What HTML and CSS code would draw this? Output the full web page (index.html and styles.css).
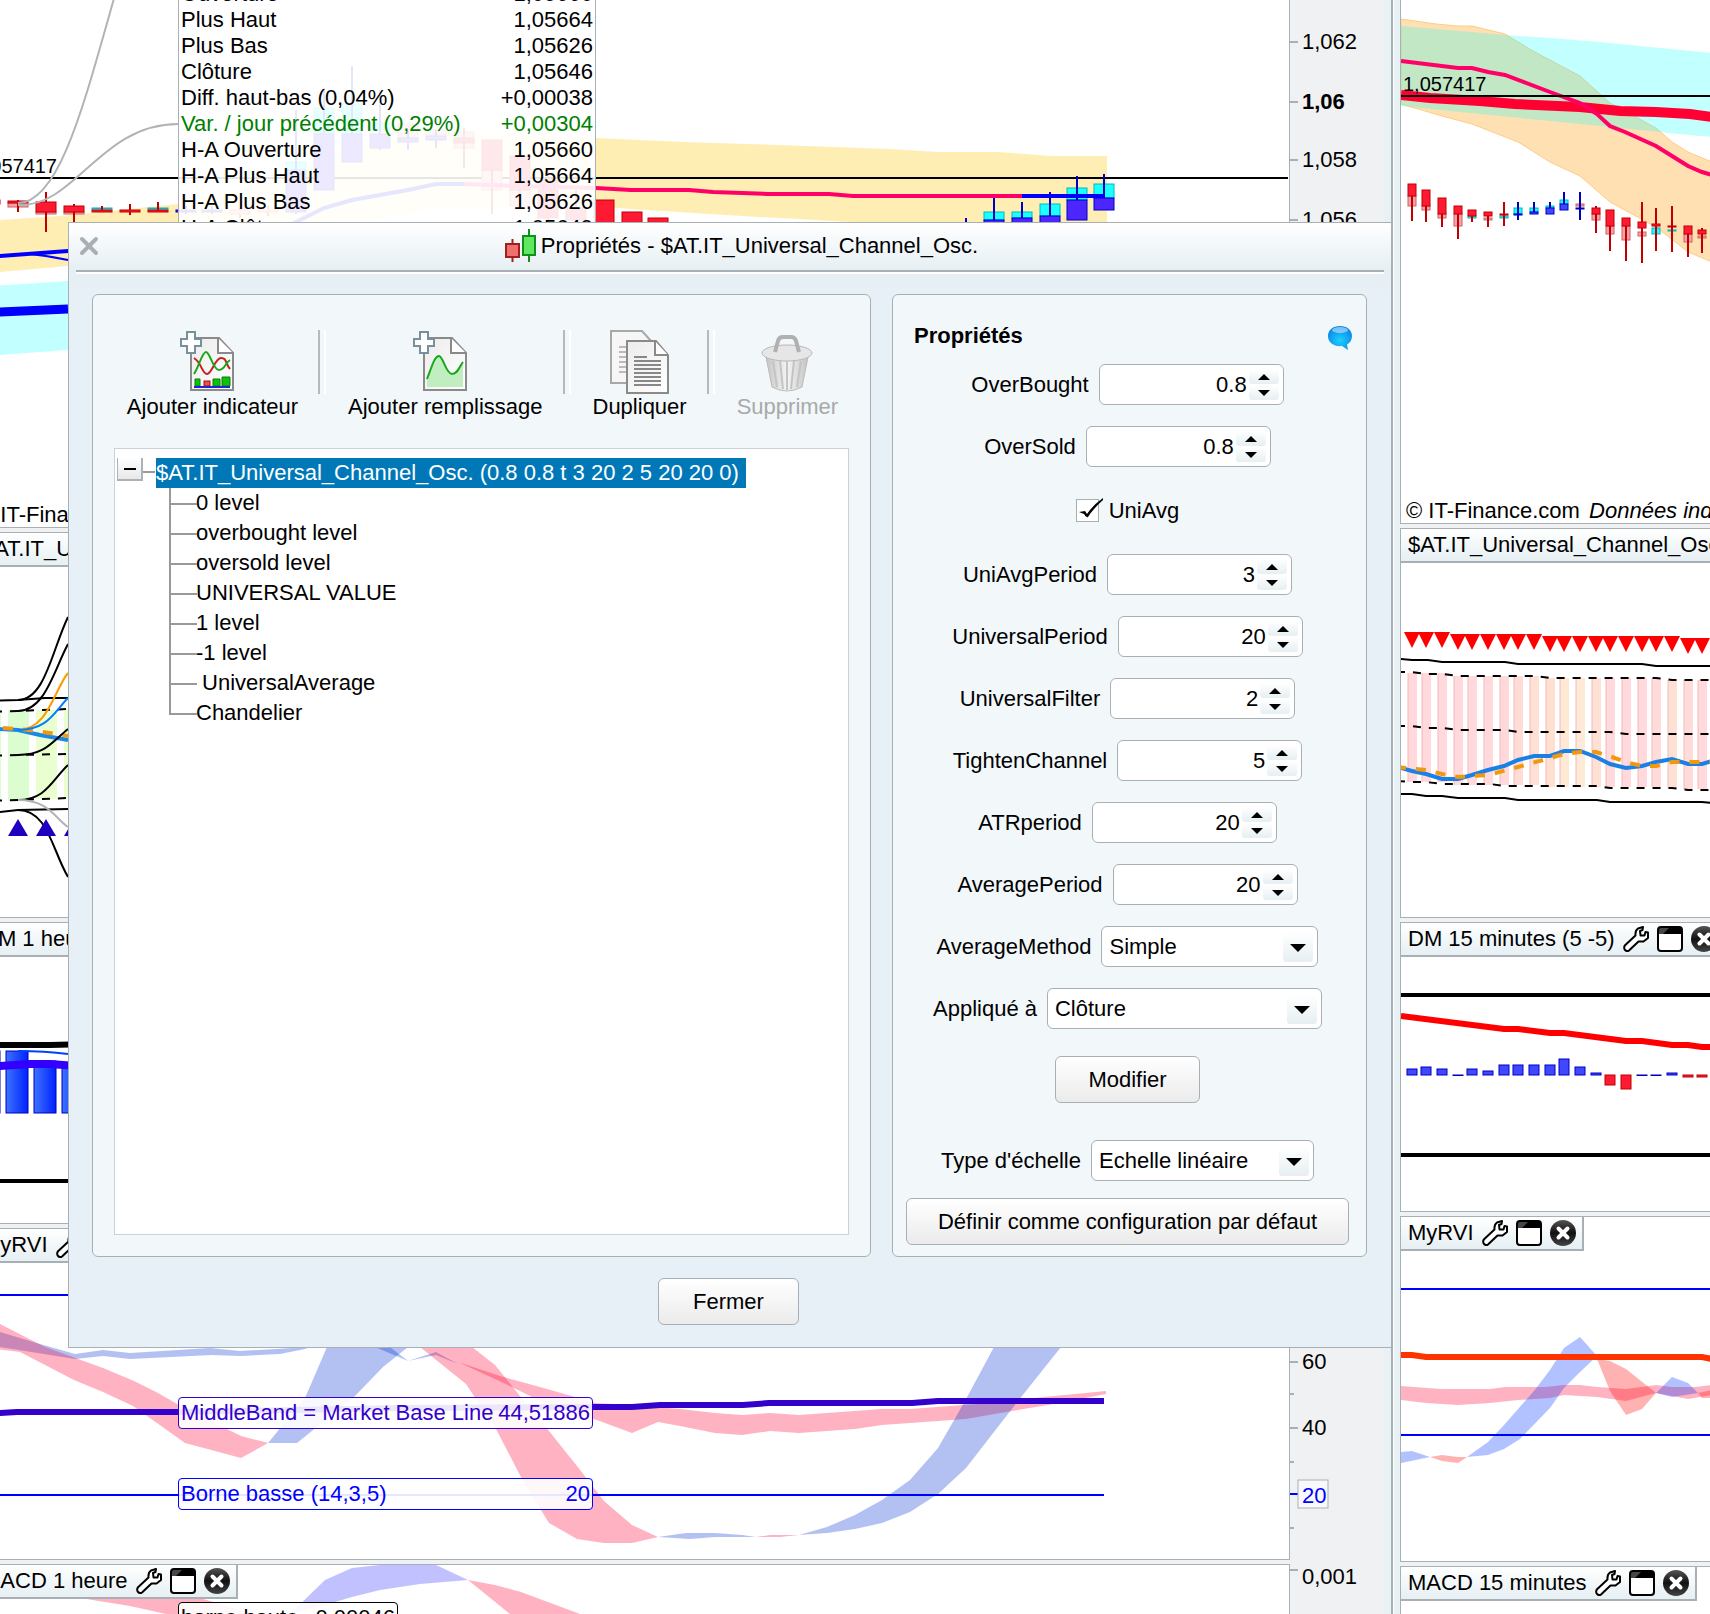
FILE: index.html
```html
<!DOCTYPE html>
<html lang="fr">
<head>
<meta charset="UTF-8">
<meta name="viewport" content="width=device-width, initial-scale=1.0">
<title>Propriétés - $AT.IT_Universal_Channel_Osc.</title>
<link rel="stylesheet" href="styles.css">
</head>
<body>

<!-- Shared icons -->
<svg class="defs" aria-hidden="true">
    <defs>
        <linearGradient id="blackShine" x1="0" y1="0" x2="0" y2="1">
            <stop offset="0" stop-color="#555"/>
            <stop offset="0.5" stop-color="#111"/>
            <stop offset="1" stop-color="#444"/>
        </linearGradient>
        <linearGradient id="barBlue">
            <stop offset="0" stop-color="#3d73ff"/>
            <stop offset="1" stop-color="#0022ff"/>
        </linearGradient>
        <linearGradient id="paper" x1="0" y1="0" x2="1" y2="1">
            <stop offset="0" stop-color="#ececec"/>
            <stop offset="1" stop-color="#ffffff"/>
        </linearGradient>
        <radialGradient id="bubble" cx="0.5" cy="0.6" r="0.6">
            <stop offset="0" stop-color="#1fd0ff"/>
            <stop offset="1" stop-color="#0a86e8"/>
        </radialGradient>
        <linearGradient id="can">
            <stop offset="0" stop-color="#c4c4c4"/>
            <stop offset="0.5" stop-color="#f4f4f4"/>
            <stop offset="1" stop-color="#c4c4c4"/>
        </linearGradient>
    </defs>
    <symbol id="wrench" viewBox="0 0 26 26">
        <path d="M20 1 15 2.500Q12 4.500 12.500 9.500L1.800 19.500Q0.500 22 2 24Q4 26 6 24.500L15.500 15.500H20.500L25 12V6.500L22.500 6L21.500 9.500L17.500 9.500L17 5L19.500 4Z" fill="#fff" stroke="#000" stroke-width="2" stroke-linejoin="round"/>
    </symbol>
    <symbol id="restore" viewBox="0 0 26 26">
        <rect x="1" y="1" width="24" height="24" rx="3" fill="#fff" stroke="#000" stroke-width="2"/>
        <path d="M1 8V4Q1 1 4 1H22Q25 1 25 4V8Z" fill="#000"/>
        <path d="M2 8V4Q2 2 4 2H12L6 8Z" fill="#777" opacity="0.6"/>
    </symbol>
    <symbol id="close" viewBox="0 0 26 26">
        <circle cx="13" cy="13" r="13" fill="url(#blackShine)"/>
        <path d="M8.500 8.500 17.500 17.500M17.500 8.500 8.500 17.500" stroke="#fff" stroke-width="4" stroke-linecap="round"/>
    </symbol>
</svg>

<main class="workspace">

    <section class="window window-hour">
        <div class="panels">
            <div class="panel">
                <svg class="chart">
                    <g transform="translate(24 0)">
                        <path class="band-yellow" d="M-24 222 0 220 60 216 178 204 240 190 300 165 360 145 420 135 500 134 596 138 683 142 779 145 889 149 938 152 999 152 1051 156 1107 156V240L851 222 725 215 631 209 560 204 440 208 340 225 240 250 178 258 68 266 0 272-24 274Z"/>
                        <path class="band-cyan" d="M-24 287 68 281 300 260V340L68 350 0 355H-24Z"/>
                        <path d="M-24 258 0 256 68 251 178 247" stroke="#00f" stroke-width="4"/>
                        <path d="M30 254Q50 256 68 260" stroke="#00f" stroke-width="2"/>
                        <path d="M-24 314 0 312 68 309" stroke="#00f" stroke-width="9"/>
                        <path d="M-24 178H1288" stroke="#000" stroke-width="2"/>
                        <g id="hourCandles"></g>
                        <path d="M260 240 296 222 324 208 352 200 408 190 436 184H464" stroke="#00f" stroke-width="4"/>
                        <path d="M464 184 520 186 596 188 631 190H689L713 192 768 194H829L853 196H1022" stroke="#ff0066" stroke-width="4"/>
                        <path d="M1022 196H1104" stroke="#00f" stroke-width="4"/>
                        <text class="level" x="57" y="173" text-anchor="end">1,057417</text>
                        <path class="link" d="M18 203C60 203 85 100 115-5"/>
                        <path class="link" d="M18 205C75 208 100 124 178 124"/>
                    </g>
                </svg>
                <dl class="quote">
                    <div><dt>Ouverture</dt><dd>1,05660</dd></div>
                    <div><dt>Plus Haut</dt><dd>1,05664</dd></div>
                    <div><dt>Plus Bas</dt><dd>1,05626</dd></div>
                    <div><dt>Clôture</dt><dd>1,05646</dd></div>
                    <div><dt>Diff. haut-bas (0,04%)</dt><dd>+0,00038</dd></div>
                    <div class="up"><dt>Var. / jour précédent (0,29%)</dt><dd>+0,00304</dd></div>
                    <div><dt>H-A Ouverture</dt><dd>1,05660</dd></div>
                    <div><dt>H-A Plus Haut</dt><dd>1,05664</dd></div>
                    <div><dt>H-A Plus Bas</dt><dd>1,05626</dd></div>
                    <div><dt>H-A Clôture</dt><dd>1,05649</dd></div>
                </dl>
                <p class="copyright">© IT-Finance.com</p>
            </div>

            <div class="panel">
                <svg class="chart">
                    <g transform="translate(24 -533)">
                        <path d="M-20 710H1V801H-20Z" fill="#d9ffcc"/>
                        <path d="M8 710H29V801H8Z" fill="#dcfdd0"/>
                        <path d="M36 710H57V799H36Z" fill="#eaffd0"/>
                        <path d="M64 709H85V798H64Z" fill="#eaffd0"/>
                        <path d="M-24 701 18 700 45 698H90" stroke="#000" stroke-width="2"/>
                        <path d="M-24 813 0 812 18 810 68 809H90" stroke="#000" stroke-width="2"/>
                        <path class="dash" d="M-22 712 18 711 68 709"/>
                        <path class="dash" d="M-22 756 18 755 68 754"/>
                        <path class="dash" d="M-22 801 18 800 68 798"/>
                        <path d="M-24 727 0 729 18 730 40 735 68 740" stroke="#1a88e6" stroke-width="4"/>
                        <path class="dash-orange" d="M3 728 30 730 68 736"/>
                        <path d="M18 700C45 700 52 650 68 617M18 711C45 711 54 670 68 644M18 755C45 755 52 742 68 729M18 800C46 800 52 780 68 765M18 810C48 810 52 850 68 877" stroke="#000" stroke-width="2"/>
                        <path d="M18 730C48 730 54 690 68 673" stroke="#ff9900" stroke-width="2"/>
                        <path d="M18 730C48 730 54 712 68 698" stroke="#0080ff" stroke-width="2"/>
                        <path class="link" d="M18 800C48 800 54 817 68 827"/>
                        <path d="M18 819 28 836H8ZM46 819 56 836H36ZM74 819 84 836H64Z" fill="#2000c0"/>
                    </g>
                </svg>
                <header class="title-bar wide">
                    <span>$AT.IT_Universal_Channel_Osc.</span>
                </header>
            </div>

            <div class="panel">
                <svg class="chart">
                    <g transform="translate(24 -922)">
                        <g fill="url(#barBlue)" stroke="#0000c0">
                            <rect x="-22" y="1050" width="22" height="62"/>
                            <rect x="6" y="1050" width="22" height="62"/>
                            <rect x="34" y="1060" width="22" height="52"/>
                            <rect x="62" y="1062" width="22" height="50"/>
                        </g>
                        <path d="M-24 1044H50L90 1043" stroke="#000" stroke-width="6"/>
                        <path d="M-24 1067 0 1065 30 1063H50L90 1066" stroke="#3300ff" stroke-width="8"/>
                        <path d="M18 1050Q45 1050 68 1053" stroke="#0040ff" stroke-width="2"/>
                        <path d="M-24 1180H90" stroke="#000" stroke-width="4"/>
                    </g>
                </svg>
                <header class="title-bar wide">
                    <span>DM 1 heure (5 -5)</span>
                </header>
            </div>

            <div class="panel">
                <svg class="chart">
                    <g transform="translate(24 -1228)">
                        <path class="fill-blue" d="M0 1331 40 1343 75 1353 103 1349 130 1352 210 1347 240 1350 310 1346 305 1348 280 1353 240 1355 212 1354 130 1358 103 1355 75 1358 0 1346Z"/>
                        <path class="fill-pink" d="M-20 1314 0 1323 45 1346 103 1367 134 1380 158 1392 179 1404 241 1435 268 1442 241 1457 215 1450 185 1442 133 1405 103 1391 74 1379 20 1351-20 1346Z"/>
                        <path class="fill-blue" d="M268 1442 305 1397 327 1346H408L383 1366 355 1395 297 1442Z"/>
                        <path class="fill-blue" d="M375 1346 408 1360 436 1351 458 1363 436 1354 408 1360 390 1346Z"/>
                        <path class="fill-pink" d="M458 1361 500 1375 540 1386 596 1402 632 1404 680 1408 715 1412 742 1414 770 1412 799 1414 882 1408 910 1408 990 1402 1044 1396 1106 1390V1393L1060 1402 1012 1410 966 1418 910 1422 882 1424 855 1428 799 1432 770 1430 742 1434 715 1432 680 1425 658 1421 632 1432 594 1418 540 1400 512 1386Z"/>
                        <path class="fill-pink" d="M420 1346 466 1383 496 1428 523 1480 549 1522 577 1538 604 1542H632L658 1536 632 1524 604 1500 577 1465 549 1430 520 1395 495 1364 472 1346Z"/>
                        <path class="fill-blue" d="M658 1536 686 1532H715L742 1534 756 1536 715 1536 690 1538Z"/>
                        <path class="fill-pink" d="M756 1536 770 1534H799L780 1536Z"/>
                        <path class="fill-blue" d="M799 1534 827 1526 855 1514 882 1499 910 1479 938 1447 965 1400 994 1346H1061L1018 1400 966 1467 938 1493 910 1511 882 1522 855 1528 827 1532Z"/>
                        <path d="M-24 1294H90" stroke="#00f" stroke-width="2"/>
                        <path d="M-24 1413 0 1412 17 1411H178L400 1407 596 1406 632 1406 660 1404H743L769 1402H912L938 1400H1104" stroke="#3300cc" stroke-width="6"/>
                        <path d="M-24 1494H1104" stroke="#00f" stroke-width="2"/>
                    </g>
                </svg>
                <header class="title-bar">
                    <span>MyRVI</span>
                    <button aria-label="Réglages"><svg><use href="#wrench"/></svg></button>
                    <button aria-label="Restaurer"><svg><use href="#restore"/></svg></button>
                    <button aria-label="Fermer"><svg><use href="#close"/></svg></button>
                </header>
                <div class="tag tag-middle"><span>MiddleBand = Market Base Line</span><span>44,51886</span></div>
                <div class="tag tag-low"><span>Borne basse (14,3,5)</span><span>20</span></div>
            </div>

            <div class="panel">
                <svg class="chart">
                    <g transform="translate(24 -1565)">
                        <path class="fill-violet" d="M290 1614 325 1580 352 1568 380 1565H436L468 1580 420 1584 380 1590 352 1597 325 1605Z"/>
                        <path class="fill-pink" d="M468 1580 495 1585 521 1592 580 1614H510Z"/>
                        <path class="fill-pink" d="M80 1598 130 1606 175 1616H260L200 1598Z"/>
                    </g>
                </svg>
                <header class="title-bar">
                    <span>MACD 1 heure</span>
                    <button aria-label="Réglages"><svg><use href="#wrench"/></svg></button>
                    <button aria-label="Restaurer"><svg><use href="#restore"/></svg></button>
                    <button aria-label="Fermer"><svg><use href="#close"/></svg></button>
                </header>
                <div class="tag tag-high"><span>borne haute</span><span>0,00046</span></div>
            </div>
        </div>

        <svg class="axis">
            <path d="M0 42H8M0 102H8M0 160H8M0 220H8M0 1362H8M0 1394H4M0 1428H8M0 1462H4M0 1528H4M0 1570H8" stroke="#a9b0b5" stroke-width="2"/>
            <path d="M0 1494H8" stroke="#00f" stroke-width="2"/>
            <rect x="8" y="1480" width="30" height="28" fill="#f8f9fa" stroke="#a9b0b5"/>
            <text x="12" y="49">1,062</text>
            <text x="12" y="109" font-weight="bold">1,06</text>
            <text x="12" y="167">1,058</text>
            <text x="12" y="227">1,056</text>
            <text x="12" y="1369">60</text>
            <text x="12" y="1435">40</text>
            <text x="12" y="1503" class="axis-current">20</text>
            <text x="12" y="1584">0,001</text>
        </svg>
    </section>

    <section class="window window-quarter">
        <div class="panels">
            <div class="panel">
                <svg class="chart">
                    <g transform="translate(-1401 0)">
                        <path class="band-orange" d="M1401 19 1436 24 1458 26H1472L1505 34 1533 51 1580 76 1610 103 1656 128 1672 142 1688 152 1712 162V262L1688 252 1656 227 1610 202 1580 176 1550 162 1518 142 1472 124 1442 116 1401 104Z"/>
                        <path class="band-cyan" d="M1401 26 1460 31 1505 35 1550 38 1600 42 1640 46 1712 53V137L1688 135 1640 130 1580 124 1550 121 1460 112 1401 106Z"/>
                        <path d="M1401 95 1430 98 1480 101 1515 104 1580 107 1620 111 1656 112 1690 114 1712 117" stroke="#ff0033" stroke-width="10"/>
                        <path d="M1401 61 1458 68H1472L1488 72 1505 75 1550 92 1580 103 1597 114 1610 126 1625 132 1656 146 1672 156 1688 166 1702 172 1712 175" stroke="#ff0066" stroke-width="4"/>
                        <path d="M1401 96H1712" stroke="#000" stroke-width="2"/>
                        <text class="level" x="1403" y="91">1,057417</text>
                        <g id="quarterCandles"></g>
                    </g>
                </svg>
                <p class="copyright">© IT-Finance.com <em>Données indicatives</em></p>
            </div>

            <div class="panel">
                <svg class="chart">
                    <g transform="translate(-1401 -529)">
                        <g id="channelBars"></g>
                        <g id="sellMarks"></g>
                        <path d="M1401 659 1412 660H1428L1442 662H1505L1518 664H1642L1656 666H1712" stroke="#000" stroke-width="2"/>
                        <path d="M1401 794H1412L1426 796H1442L1458 798H1505L1518 800H1597L1610 802H1702L1712 803" stroke="#000" stroke-width="2"/>
                        <path class="dash" d="M1397 672H1412L1426 674H1442L1458 676H1534L1550 678H1656L1672 680H1712"/>
                        <path class="dash" d="M1397 726H1412L1426 728H1442L1458 730H1505L1518 732H1610L1626 734H1712"/>
                        <path class="dash" d="M1397 781 1412 782H1426L1442 784H1490L1505 786H1597L1610 788H1672L1688 790H1712"/>
                        <path d="M1401 768 1412 771 1426 774 1442 779H1458L1472 775 1488 770 1504 766 1518 760 1534 756H1550L1564 751H1580L1596 757 1610 764 1626 768 1642 766 1656 762 1672 759 1688 764H1702L1712 761" stroke="#1a80e6" stroke-width="4"/>
                        <path class="dash-orange" d="M1396 767 1426 770 1442 774 1458 777 1488 775 1518 767 1550 758 1564 754 1580 752H1596L1612 757 1626 762 1642 766H1656L1672 762H1712"/>
                    </g>
                </svg>
                <header class="title-bar wide">
                    <span>$AT.IT_Universal_Channel_Osc.</span>
                </header>
            </div>

            <div class="panel">
                <svg class="chart">
                    <g transform="translate(-1401 -922)">
                        <path d="M1401 994H1712M1401 1154H1712" stroke="#000" stroke-width="4"/>
                        <path d="M1401 1015 1504 1028H1518L1550 1032H1564L1626 1040H1642L1672 1044H1688L1702 1046H1712" stroke="#f00" stroke-width="6"/>
                        <g id="dmBars"></g>
                    </g>
                </svg>
                <header class="title-bar wide">
                    <span>DM 15 minutes (5 -5)</span>
                    <button aria-label="Réglages"><svg><use href="#wrench"/></svg></button>
                    <button aria-label="Restaurer"><svg><use href="#restore"/></svg></button>
                    <button aria-label="Fermer"><svg><use href="#close"/></svg></button>
                </header>
            </div>

            <div class="panel">
                <svg class="chart">
                    <g transform="translate(-1401 -1216)">
                        <path class="fill-pink" d="M1401 1385 1427 1387 1442 1388H1490L1505 1386H1545L1564 1384H1580L1597 1386 1626 1388 1656 1384 1672 1386H1695L1712 1384V1394L1688 1398 1672 1395 1656 1392 1626 1400 1597 1396 1564 1394 1550 1397 1518 1399 1490 1402 1458 1404 1426 1402 1401 1399Z"/>
                        <path class="fill-sky" d="M1401 1451 1412 1450 1430 1456 1401 1462Z"/>
                        <path class="fill-red" d="M1430 1456 1442 1454 1458 1456H1467L1458 1462 1442 1460Z"/>
                        <path class="fill-sky" d="M1467 1456 1488 1441 1504 1424 1534 1390 1550 1369 1564 1347 1580 1336 1597 1355 1580 1371 1564 1387 1550 1407 1520 1438 1504 1448 1488 1454Z"/>
                        <path class="fill-red" d="M1597 1358 1610 1360 1626 1368 1656 1392 1642 1408 1626 1414 1610 1390Z"/>
                        <path class="fill-sky" d="M1656 1392 1672 1376 1688 1382 1698 1392 1672 1396Z"/>
                        <path class="fill-red" d="M1698 1392 1712 1389V1397H1702Z"/>
                        <path d="M1401 1288H1712M1401 1434H1712" stroke="#00f" stroke-width="2"/>
                        <path d="M1401 1354H1412L1426 1356H1702L1712 1358" stroke="#ff3300" stroke-width="6"/>
                    </g>
                </svg>
                <header class="title-bar">
                    <span>MyRVI</span>
                    <button aria-label="Réglages"><svg><use href="#wrench"/></svg></button>
                    <button aria-label="Restaurer"><svg><use href="#restore"/></svg></button>
                    <button aria-label="Fermer"><svg><use href="#close"/></svg></button>
                </header>
            </div>

            <div class="panel">
                <header class="title-bar">
                    <span>MACD 15 minutes</span>
                    <button aria-label="Réglages"><svg><use href="#wrench"/></svg></button>
                    <button aria-label="Restaurer"><svg><use href="#restore"/></svg></button>
                    <button aria-label="Fermer"><svg><use href="#close"/></svg></button>
                </header>
            </div>
        </div>
    </section>

    <div class="dialog" role="dialog" aria-labelledby="dialogTitle">
        <header class="dialog-header">
            <button class="dialog-close" aria-label="Fermer la fenêtre">
                <svg width="20" height="20" viewBox="0 0 20 20"><path d="M3 3 17 17M17 3 3 17" stroke="#a9b0b5" stroke-width="4" stroke-linecap="round"/></svg>
            </button>
            <h1 id="dialogTitle">
                <svg width="32" height="34" viewBox="0 0 32 34">
                    <path d="M7.500 10V33" stroke="#a02020" stroke-width="2"/>
                    <rect x="1" y="15" width="13" height="13" fill="#f07070" stroke="#a02020" stroke-width="2"/>
                    <path d="M24 0V33" stroke="#109018" stroke-width="2"/>
                    <rect x="18" y="7" width="12" height="19" fill="#60e860" stroke="#109018" stroke-width="2"/>
                </svg>
                <span>Propriétés - $AT.IT_Universal_Channel_Osc.</span>
            </h1>
        </header>

        <div class="dialog-body">
            <section class="card structure">
                <div class="toolbar">
                    <button class="add">
                        <svg width="60" height="62" viewBox="0 0 60 62">
                            <path d="M16 7H44L58 22V59H16Z" fill="url(#paper)" stroke="#8a8a8a" stroke-width="2"/>
                            <path d="M43 7V22H58" fill="#fff" stroke="#8a8a8a" stroke-width="2"/>
                            <path d="M19 27C27 32 27 43 32 43S40 27 46 27S50 32 55 38" stroke="#c81e1e" stroke-width="2"/>
                            <path d="M19 43C24 36 27 21 31 21S38 39 44 39S50 32 55 29" stroke="#16a81c" stroke-width="2"/>
                            <path d="M20 48H25V55H20ZM38 48H45V55H38ZM47 46H55V55H47Z" fill="#0ac30a" stroke="#0a7d0a"/>
                            <rect x="29" y="50" width="6" height="5" fill="#e65050" stroke="#a01010"/>
                            <path d="M19 56H55" stroke="#2222d8" stroke-width="2"/>
                            <path class="plus" d="M12 1H20V8H26V15H20V22H12V15H6V8H12Z"/>
                        </svg>
                        <span>Ajouter indicateur</span>
                    </button>
                    <button class="add">
                        <svg width="60" height="62" viewBox="0 0 60 62">
                            <path d="M16 7H44L58 22V59H16Z" fill="url(#paper)" stroke="#8a8a8a" stroke-width="2"/>
                            <path d="M43 7V22H58" fill="#fff" stroke="#8a8a8a" stroke-width="2"/>
                            <path d="M19 48C25 32 27 25 31 25S38 43 44 43S51 36 55 31V56H19Z" fill="#c0eec0"/>
                            <path d="M19 48C25 32 27 25 31 25S38 43 44 43S51 36 55 31" stroke="#16a81c" stroke-width="2"/>
                            <path class="plus" d="M12 1H20V8H26V15H20V22H12V15H6V8H12Z"/>
                        </svg>
                        <span>Ajouter remplissage</span>
                    </button>
                    <button>
                        <svg width="60" height="64" viewBox="0 0 60 64">
                            <path d="M1 1H32L42 12V53H1Z" fill="#f6f6f6" stroke="#a8a8a8" stroke-width="2"/>
                            <path d="M9 17H30M9 22H30M9 27H30M9 32H30M9 37H30M9 42H30" stroke="#bbb" stroke-width="2"/>
                            <path d="M17 11H46L58 25V63H17Z" fill="url(#paper)" stroke="#8a8a8a" stroke-width="2"/>
                            <path d="M45 11V25H58" fill="#fff" stroke="#8a8a8a" stroke-width="2"/>
                            <path d="M24 27H37M24 31H51M24 35H51M24 39H51M24 43H51M24 47H51M24 51H51M24 55H51" stroke="#888" stroke-width="2"/>
                        </svg>
                        <span>Dupliquer</span>
                    </button>
                    <button disabled>
                        <svg width="52" height="62" viewBox="0 0 52 62">
                            <path d="M5 26 11 56Q26 64 41 56L47 26Z" fill="url(#can)" stroke="#bbb"/>
                            <path d="M12 30 16 56M19 30 22 58M26 30V59M33 30 30 58M40 30 36 56" stroke="#c4c4c4" stroke-width="2"/>
                            <ellipse cx="26" cy="22" rx="25" ry="8" fill="#e6e6e6" stroke="#b8b8b8"/>
                            <path d="M14 21 17 10Q18 6 22 6H30Q34 6 35 10L38 21" stroke="#b0b0b0" stroke-width="4"/>
                        </svg>
                        <span>Supprimer</span>
                    </button>
                </div>

                <div class="tree">
                    <div class="tree-root">
                        <button class="toggle" aria-label="Réduire"></button>
                        <span class="selected">$AT.IT_Universal_Channel_Osc. (0.8 0.8 t 3 20 2 5 20 20 0)</span>
                    </div>
                    <ul>
                        <li>0 level</li>
                        <li>overbought level</li>
                        <li>oversold level</li>
                        <li>UNIVERSAL VALUE</li>
                        <li>1 level</li>
                        <li>-1 level</li>
                        <li>&nbsp;UniversalAverage</li>
                        <li>Chandelier</li>
                    </ul>
                </div>
            </section>

            <form class="card properties">
                <div class="properties-head">
                    <h2>Propriétés</h2>
                    <svg width="26" height="26" viewBox="0 0 26 26">
                        <path d="M13 1C20 1 25 5 25 11C25 15 23 18 20 19.500L21 25L15 21C6 22 1 17 1 11C1 5 6 1 13 1Z" fill="url(#bubble)"/>
                        <ellipse cx="13" cy="5" rx="8" ry="3" fill="#fff" opacity="0.45"/>
                    </svg>
                </div>

                <div class="row">
                    <label for="overBought">OverBought</label>
                    <div class="spinner">
                        <input id="overBought" type="text" value="0.8">
                        <div class="arrows"><button type="button" class="inc" aria-label="Plus"></button><button type="button" class="dec" aria-label="Moins"></button></div>
                    </div>
                </div>
                <div class="row">
                    <label for="overSold">OverSold</label>
                    <div class="spinner">
                        <input id="overSold" type="text" value="0.8">
                        <div class="arrows"><button type="button" class="inc" aria-label="Plus"></button><button type="button" class="dec" aria-label="Moins"></button></div>
                    </div>
                </div>
                <div class="row check-row">
                    <span class="check">
                        <input id="uniAvg" type="checkbox" checked>
                        <svg width="28" height="26" viewBox="0 0 28 26"><path d="M3 15 9 14 11 17Q17 8 27 1V3Q17 12 12 20 10 21 8 17Z" fill="#000"/></svg>
                    </span>
                    <label for="uniAvg">UniAvg</label>
                </div>
                <div class="row">
                    <label for="uniAvgPeriod">UniAvgPeriod</label>
                    <div class="spinner">
                        <input id="uniAvgPeriod" type="text" value="3">
                        <div class="arrows"><button type="button" class="inc" aria-label="Plus"></button><button type="button" class="dec" aria-label="Moins"></button></div>
                    </div>
                </div>
                <div class="row">
                    <label for="universalPeriod">UniversalPeriod</label>
                    <div class="spinner">
                        <input id="universalPeriod" type="text" value="20">
                        <div class="arrows"><button type="button" class="inc" aria-label="Plus"></button><button type="button" class="dec" aria-label="Moins"></button></div>
                    </div>
                </div>
                <div class="row">
                    <label for="universalFilter">UniversalFilter</label>
                    <div class="spinner">
                        <input id="universalFilter" type="text" value="2">
                        <div class="arrows"><button type="button" class="inc" aria-label="Plus"></button><button type="button" class="dec" aria-label="Moins"></button></div>
                    </div>
                </div>
                <div class="row">
                    <label for="tightenChannel">TightenChannel</label>
                    <div class="spinner">
                        <input id="tightenChannel" type="text" value="5">
                        <div class="arrows"><button type="button" class="inc" aria-label="Plus"></button><button type="button" class="dec" aria-label="Moins"></button></div>
                    </div>
                </div>
                <div class="row">
                    <label for="atrPeriod">ATRperiod</label>
                    <div class="spinner">
                        <input id="atrPeriod" type="text" value="20">
                        <div class="arrows"><button type="button" class="inc" aria-label="Plus"></button><button type="button" class="dec" aria-label="Moins"></button></div>
                    </div>
                </div>
                <div class="row">
                    <label for="averagePeriod">AveragePeriod</label>
                    <div class="spinner">
                        <input id="averagePeriod" type="text" value="20">
                        <div class="arrows"><button type="button" class="inc" aria-label="Plus"></button><button type="button" class="dec" aria-label="Moins"></button></div>
                    </div>
                </div>
                <div class="row">
                    <label for="averageMethod">AverageMethod</label>
                    <div class="combo combo-method">
                        <select id="averageMethod"><option>Simple</option></select>
                    </div>
                </div>
                <div class="row">
                    <label for="appliedTo">Appliqué à</label>
                    <div class="combo combo-applied">
                        <select id="appliedTo"><option>Clôture</option></select>
                    </div>
                </div>
                <button type="button" class="btn modify">Modifier</button>
                <div class="row scale-row">
                    <label for="scaleType">Type d'échelle</label>
                    <div class="combo combo-scale">
                        <select id="scaleType"><option>Echelle linéaire</option></select>
                    </div>
                </div>
                <button type="button" class="btn set-default">Définir comme configuration par défaut</button>
            </form>
        </div>

        <footer class="dialog-footer">
            <button class="btn">Fermer</button>
        </footer>
    </div>
</main>

<script>
    const SVG = "http://www.w3.org/2000/svg";

    function addShape(parent, tag, attributes) {
        const shape = document.createElementNS(SVG, tag);
        for (const name in attributes) {
            shape.setAttribute(name, attributes[name]);
        }
        parent.appendChild(shape);
    }

    // x, wick top, wick bottom, body top, body bottom, kind, ghost top, ghost bottom, ghost kind
    const hourCandles = [
        [-10, 200, 204, 200, 204, "red"],
        [18, 200, 212, 201, 203, "red", 203, 207, "pink"],
        [46, 192, 232, 202, 212, "red", 212, 214, "pink"],
        [74, 204, 222, 206, 212, "red", 212, 214, "pink"],
        [102, 206, 212, 210, 212, "red", 208, 209, "cyan"],
        [130, 204, 215, 210, 212, "red"],
        [158, 202, 212, 210, 212, "red", 208, 209, "cyan"],
        [186, 206, 214, 210, 212, "violet"],
        [212, 206, 214, 210, 212, "violet"],
        [240, 208, 218, 210, 214, "pink"],
        [268, 206, 216, 210, 212, "pink"],
        [296, 110, 214, 170, 212, "violet", 162, 170, "cyan"],
        [324, 88, 134, 134, 190, "violet", 108, 134, "cyan"],
        [352, 66, 134, 134, 162, "violet", 104, 134, "cyan"],
        [380, 90, 150, 134, 148, "violet", 123, 130, "cyan"],
        [408, 130, 150, 138, 142, "violet", 124, 138, "pink"],
        [436, 130, 148, 136, 140, "violet", 130, 135, "pink"],
        [464, 128, 168, 138, 143, "red", 132, 148, "pink"],
        [492, 140, 214, 140, 170, "red", 170, 190, "pink"],
        [520, 156, 206, 156, 190, "red", 190, 206, "pink"],
        [548, 170, 222, 180, 218, "red"],
        [576, 190, 222, 208, 220, "red"],
        [604, 200, 230, 200, 230, "red"],
        [632, 212, 230, 212, 230, "red"],
        [658, 218, 230, 218, 230, "red"],
        [966, 218, 230, 224, 230, "violet"],
        [994, 194, 220, 220, 230, "violet", 212, 220, "cyan"],
        [1022, 202, 218, 218, 230, "violet", 212, 218, "cyan"],
        [1050, 192, 216, 216, 230, "violet", 204, 216, "cyan"],
        [1077, 176, 200, 200, 220, "violet", 188, 200, "cyan"],
        [1104, 174, 198, 198, 210, "violet", 184, 198, "cyan"]
    ];

    const quarterCandles = [
        [1412, 184, 221, 184, 196, "red", 196, 206, "pink"],
        [1426, 190, 222, 190, 206, "red", 206, 210, "pink"],
        [1442, 198, 227, 198, 214, "red", 214, 218, "pink"],
        [1458, 206, 239, 206, 214, "red", 214, 226, "pink"],
        [1472, 210, 222, 210, 216, "red", 216, 218, "cyan"],
        [1488, 212, 227, 212, 216, "red", 218, 220, "pink"],
        [1504, 202, 226, 214, 215, "red", 216, 218, "cyan"],
        [1518, 202, 220, 214, 215, "blue", 208, 214, "cyan"],
        [1534, 202, 214, 212, 214, "blue", 208, 212, "cyan"],
        [1550, 202, 208, 208, 214, "blue", 206, 208, "cyan"],
        [1564, 192, 204, 204, 210, "blue", 200, 204, "cyan"],
        [1580, 192, 220, 208, 209, "blue", 204, 206, "pink"],
        [1596, 206, 233, 208, 214, "red", 214, 220, "pink"],
        [1610, 210, 251, 210, 226, "red", 226, 234, "pink"],
        [1626, 218, 261, 218, 226, "red", 226, 240, "pink"],
        [1642, 202, 263, 222, 228, "red", 232, 236, "pink"],
        [1656, 208, 251, 224, 226, "red", 228, 234, "cyan"],
        [1672, 206, 252, 226, 227, "red", 230, 231, "cyan"],
        [1688, 226, 257, 226, 234, "red", 234, 242, "pink"],
        [1702, 228, 253, 230, 234, "red", 236, 238, "pink"]
    ];

    function drawCandles(id, candles, width) {
        const group = document.getElementById(id);
        candles.forEach(([x, high, low, top, bottom, kind, ghostTop, ghostBottom, ghostKind]) => {
            const left = x - width / 2;
            if (ghostKind) {
                addShape(group, "rect", { x: left, y: ghostTop, width: width, height: ghostBottom - ghostTop, class: "ghost-" + ghostKind });
            }
            addShape(group, "path", { d: `M${x} ${high}V${low}`, class: "wick-" + kind });
            addShape(group, "rect", { x: left, y: top, width: width, height: bottom - top, class: "body-" + kind });
        });
    }

    // Difference bars around the zero line
    const dmValues = [6, 8, 6, 0, 6, 4, 10, 10, 10, 10, 16, 8, 2, -10, -14, 0, 0, 2, -2, -2];

    function drawDmBars() {
        const group = document.getElementById("dmBars");
        dmValues.forEach((value, index) => {
            addShape(group, "rect", {
                x: quarterCandles[index][0] - 5,
                y: value > 0 ? 1074 - value : 1074,
                width: 10,
                height: Math.abs(value) || 0.5,
                class: value < 0 ? "body-red" : "body-blue"
            });
        });
    }

    const channelColors = ["#ffd9dc", "#ffd9dc", "#ffd9dc", "#ffd9dc", "#ffd9dc", "#ffd9dc", "#ffd9d9", "#ffdcd6", "#ffe0d4",
        "#ffe0d0", "#ffe8d4", "#ffead8", "#ffe0d4", "#ffd9dc", "#ffd9dc", "#ffd9dc", "#ffdcd9", "#ffe0d4", "#ffdcd9", "#ffd9dc"];

    function drawChannel() {
        const bars = document.getElementById("channelBars");
        const marks = document.getElementById("sellMarks");
        quarterCandles.forEach(([x], index) => {
            const top = index < 3 ? 673 : index < 9 ? 676 : index < 17 ? 678 : 680;
            addShape(bars, "rect", { x: x - 4, y: top, width: 9, height: 109, fill: channelColors[index] });
            addShape(bars, "path", { d: `M${x - 4} ${top}V${top + 109}`, stroke: "#f5b8b8" });
            const mark = index < 3 ? 632 : index < 9 ? 634 : index < 18 ? 636 : 638;
            addShape(marks, "path", { d: `M${x - 8} ${mark}H${x + 8}L${x} ${mark + 16}Z`, fill: "#f00" });
        });
    }

    drawCandles("hourCandles", hourCandles, 20);
    drawCandles("quarterCandles", quarterCandles, 8);
    drawDmBars();
    drawChannel();
</script>
</body>
</html>
```

FILE: styles.css
```css
* {
    box-sizing: border-box;
}

body {
    margin: 0;
    font-family: "Liberation Sans", Arial, sans-serif;
    font-size: 22px;
    line-height: 26px;
    color: #000;
    background-color: #fff;
    overflow: hidden;
}

button, input, select {
    font: inherit;
    color: inherit;
}

button {
    padding: 0;
    border: none;
    background: none;
}

svg {
    display: block;
    fill: none;
    flex-shrink: 0;
}

.defs {
    position: absolute;
    width: 0;
    height: 0;
}

/* Workspace */

.workspace {
    position: relative;
    display: flex;
    height: 100vh;
    min-height: 1360px;
    overflow: hidden;
}

.window {
    display: flex;
    background-color: #f0f1f3;
}

.window-hour {
    flex: 1;
    min-width: 0;
    margin-left: -25px;
    border-right: 2px solid #a9b0b5;
}

.window-quarter {
    width: 317px;
    padding-left: 6px;
    border-left: 1px solid #fff;
    background-color: #e8f1f4;
}

.panels {
    flex: 1;
    min-width: 0;
    display: grid;
    gap: 4px;
    background-color: #f0f1f3;
}

.window-hour .panels {
    grid-template-rows: 528fr 386fr 302fr 332fr 50fr;
}

.window-quarter .panels {
    grid-template-rows: 524fr 390fr 290fr 346fr 48fr;
}

.panel {
    position: relative;
    min-height: 0;
    border: 1px solid #a9b0b5;
    background-color: #fff;
    overflow: hidden;
}

.panel:first-child {
    border-top: none;
}

.panel:last-child {
    border-bottom: none;
}

.window-quarter .panel {
    border-right: none;
}

.chart {
    position: absolute;
    inset: 0;
    width: 100%;
    height: 100%;
}

.axis {
    width: 101px;
    height: 100%;
    border-right: 7px solid #e8f1f4;
}

text {
    fill: #000;
    font-size: 22px;
}

.level {
    font-size: 20px;
}

.axis-current {
    fill: #00f;
}

.title-bar {
    position: absolute;
    top: 0;
    left: 0;
    display: flex;
    align-items: center;
    gap: 8px;
    height: 34px;
    padding: 0 6px;
    border-right: 2px solid #a9b0b5;
    border-bottom: 2px solid #a9b0b5;
    background: linear-gradient(#fff, #e6eff3);
    line-height: 24px;
    white-space: nowrap;
}

.title-bar.wide {
    right: 0;
    border-right: none;
}

.title-bar button {
    flex-shrink: 0;
}

.title-bar svg {
    width: 26px;
    height: 26px;
}

.window-quarter .title-bar {
    padding-left: 7px;
}

.copyright {
    position: absolute;
    left: 5px;
    bottom: -1px;
    margin: 0;
    white-space: nowrap;
}

.window-hour .copyright {
    left: 2px;
}

.copyright em {
    margin-left: 3px;
}

.quote {
    position: absolute;
    top: -19px;
    left: 202px;
    width: 418px;
    margin: 0;
    padding: 0 2px;
    border: 1px solid #a9b0b5;
    border-top: none;
    background-color: rgba(255, 255, 255, 0.9);
}

.quote div {
    display: flex;
    justify-content: space-between;
}

.quote dd {
    margin: 0;
}

.quote .up {
    color: #008000;
}

.tag {
    position: absolute;
    left: 202px;
    width: 415px;
    height: 32px;
    padding: 2px;
    display: flex;
    justify-content: space-between;
    border: 1px solid;
    border-radius: 4px;
    background-color: rgba(255, 255, 255, 0.9);
    white-space: nowrap;
}

.tag-middle {
    top: 168px;
    color: #3300cc;
}

.tag-low {
    top: 249px;
    color: #00f;
}

.tag-high {
    top: 37px;
    width: 220px;
}

/* Chart series */

.band-yellow {
    fill: #ffeeb3;
}

.band-cyan {
    fill: rgba(0, 255, 255, 0.24);
}

.band-orange {
    fill: #ffe0b3;
    stroke: #ffcc88;
}

.fill-pink {
    fill: rgba(255, 0, 50, 0.3);
}

.fill-red {
    fill: rgba(255, 0, 0, 0.3);
}

.fill-blue {
    fill: rgba(0, 50, 210, 0.3);
}

.fill-sky {
    fill: rgba(0, 50, 255, 0.3);
}

.fill-violet {
    fill: rgba(50, 50, 255, 0.3);
}

.link {
    stroke: #b0b4b8;
    stroke-width: 2;
}

.dash {
    stroke: #000;
    stroke-width: 2;
    stroke-dasharray: 8 8;
}

.dash-orange {
    stroke: #f09810;
    stroke-width: 4;
    stroke-dasharray: 10 10;
}

.wick-red, .wick-pink {
    stroke: #c00000;
    stroke-width: 2;
}

.wick-blue, .wick-violet {
    stroke: #0000c0;
    stroke-width: 2;
}

.body-red {
    fill: #ff1a33;
    stroke: #c00000;
}

.body-pink, .ghost-pink {
    fill: #f9a0a8;
    stroke: #d06060;
}

.body-blue {
    fill: #4048ff;
    stroke: #0000c0;
}

.body-violet {
    fill: #4d26ff;
    stroke: #0000c0;
}

.ghost-cyan {
    fill: #1affff;
    stroke: #00b8c0;
}

/* Dialog */

.dialog {
    position: absolute;
    top: 222px;
    left: 68px;
    right: 317px;
    border: 1px solid #a9b0b5;
    border-right-width: 2px;
    background: linear-gradient(#fff, #e6eff3 47px, #e8f0f7 72px);
}

.dialog-header {
    display: flex;
    align-items: center;
    height: 51px;
    margin: 0 7px;
    padding: 0 0 3px 2px;
    border-bottom: 2px solid #fff;
    box-shadow: inset 0 -2px #a9b0b5;
}

.dialog-close {
    margin-left: 1px;
}

.dialog-header h1 {
    flex: 1;
    display: flex;
    justify-content: center;
    align-items: center;
    gap: 4px;
    margin: 0;
    font-size: 22px;
    font-weight: normal;
}

.dialog-body {
    display: grid;
    grid-template-columns: minmax(0, 1fr) 475px;
    gap: 21px;
    padding: 20px 24px 0 23px;
}

.card {
    border: 1px solid #a9b0b5;
    border-radius: 6px;
    background-color: #f2f7fa;
}

.structure {
    display: flex;
    flex-direction: column;
    padding: 35px 21px 21px;
}

.toolbar {
    display: flex;
    justify-content: center;
    margin: 0 -14px 28px;
}

.toolbar button {
    display: flex;
    flex-direction: column;
    align-items: center;
    padding: 0 24px 0 26px;
    position: relative;
    white-space: nowrap;
}

.toolbar button svg {
    height: 64px;
}

/* The plus sign hangs out on the left of the sheet */
.toolbar .add svg {
    margin-right: 14px;
}

/* Separator between tools */
.toolbar button + button::before {
    content: "";
    position: absolute;
    left: -4px;
    top: 0;
    width: 4px;
    height: 64px;
    border-left: 2px solid #b4babe;
    border-right: 2px solid #fff;
}

.toolbar button:disabled {
    color: #a9a9a9;
}

.plus {
    fill: #fff;
    stroke: #78909c;
    stroke-width: 2;
}

.tree {
    flex: 1;
    padding: 9px 2px;
    border: 1px solid #c9d2d8;
    background-color: #fff;
}

.tree-root {
    display: flex;
    height: 30px;
}

.toggle {
    width: 26px;
    height: 23px;
    border: 1px solid #a9b4ba;
    border-width: 0 2px 2px 1px;
    background: linear-gradient(#fff, #e8e8e8);
}

.toggle::before {
    content: "";
    display: block;
    width: 12px;
    height: 2px;
    margin: 0 auto;
    background-color: #000;
}

.tree-root::before {
    content: "";
    order: 1;
    width: 12px;
    height: 2px;
    margin: 13px 1px 0 0;
    background-color: #999;
}

.selected {
    order: 2;
    padding: 2px 7px 2px 0;
    color: #fff;
    background-color: #0078b8;
    white-space: nowrap;
}

.tree ul {
    margin: 0 0 0 52px;
    padding: 0;
    list-style: none;
}

.tree li {
    position: relative;
    padding-left: 27px;
    line-height: 30px;
}

/* Tree branches */
.tree li::before {
    content: "";
    position: absolute;
    left: 0;
    top: -15px;
    width: 26px;
    height: 30px;
    border-left: 2px solid #999;
    border-bottom: 2px solid #999;
}

.tree li:first-child::before {
    top: 0;
    height: 15px;
}

.properties {
    display: flex;
    flex-direction: column;
    align-items: center;
    padding: 28px 17px 11px 13px;
}

.properties-head {
    align-self: stretch;
    display: flex;
    justify-content: space-between;
    align-items: center;
    height: 26px;
    margin: 0 -4px 15px 8px;
}

h2 {
    margin: 0;
    font-size: 22px;
}

.properties-head svg {
    margin-top: 4px;
}

.row {
    display: flex;
    align-items: center;
    gap: 10px;
    margin-bottom: 21px;
    white-space: nowrap;
}

.check-row {
    height: 45px;
}

.check {
    position: relative;
    width: 23px;
    height: 23px;
}

.check input {
    appearance: none;
    display: block;
    width: 23px;
    height: 23px;
    margin: 0;
    border: 1px solid #a9b0b5;
    background-color: #fff;
}

.check svg {
    position: absolute;
    left: 0;
    top: -2px;
    pointer-events: none;
}

.spinner {
    display: flex;
    align-items: center;
    width: 185px;
    height: 41px;
    padding-right: 4px;
    border: 1px solid #a9b0b5;
    border-radius: 6px;
    background-color: #fff;
}

.spinner input {
    flex: 1;
    min-width: 0;
    padding: 0 2px;
    border: none;
    background: none;
    text-align: right;
}

.arrows {
    display: flex;
    flex-direction: column;
    gap: 1px;
}

.arrows button {
    width: 30px;
    height: 15px;
    border-radius: 3px;
    background: linear-gradient(#fff, #e6eff3);
}

.arrows button::before {
    content: "";
    display: block;
    width: 0;
    margin: 0 auto;
    border: 6px solid transparent;
}

.arrows .inc::before {
    border-top: none;
    border-bottom-color: #000;
}

.arrows .dec::before {
    border-bottom: none;
    border-top-color: #000;
}

.combo {
    position: relative;
    height: 41px;
}

.combo-method {
    width: 217px;
}

.combo-applied {
    width: 275px;
}

.combo-scale {
    width: 223px;
}

.combo select {
    appearance: none;
    width: 100%;
    height: 100%;
    padding: 0 36px 0 7px;
    border: 1px solid #a9b0b5;
    border-radius: 6px;
    background-color: #fff;
}

.combo::before {
    content: "";
    position: absolute;
    right: 5px;
    top: 6px;
    width: 30px;
    height: 30px;
    border-radius: 3px;
    background: linear-gradient(#fff, #e6eff3);
    pointer-events: none;
}

.combo::after {
    content: "";
    position: absolute;
    right: 12px;
    top: 18px;
    border: 8px solid transparent;
    border-top-color: #000;
    border-bottom: none;
    pointer-events: none;
}

.btn {
    height: 47px;
    padding: 0 32px;
    border: 1px solid #a9b0b5;
    border-radius: 6px;
    background: linear-gradient(#fff, #ebebeb);
    white-space: nowrap;
}

.modify {
    margin: 6px 0 37px;
}

.scale-row {
    margin-bottom: 17px;
}

.set-default {
    align-self: stretch;
    padding: 0;
}

.dialog-footer {
    display: flex;
    justify-content: center;
    padding: 21px 3px 22px 0;
}

.dialog-footer .btn {
    padding: 0 34px;
}
```
